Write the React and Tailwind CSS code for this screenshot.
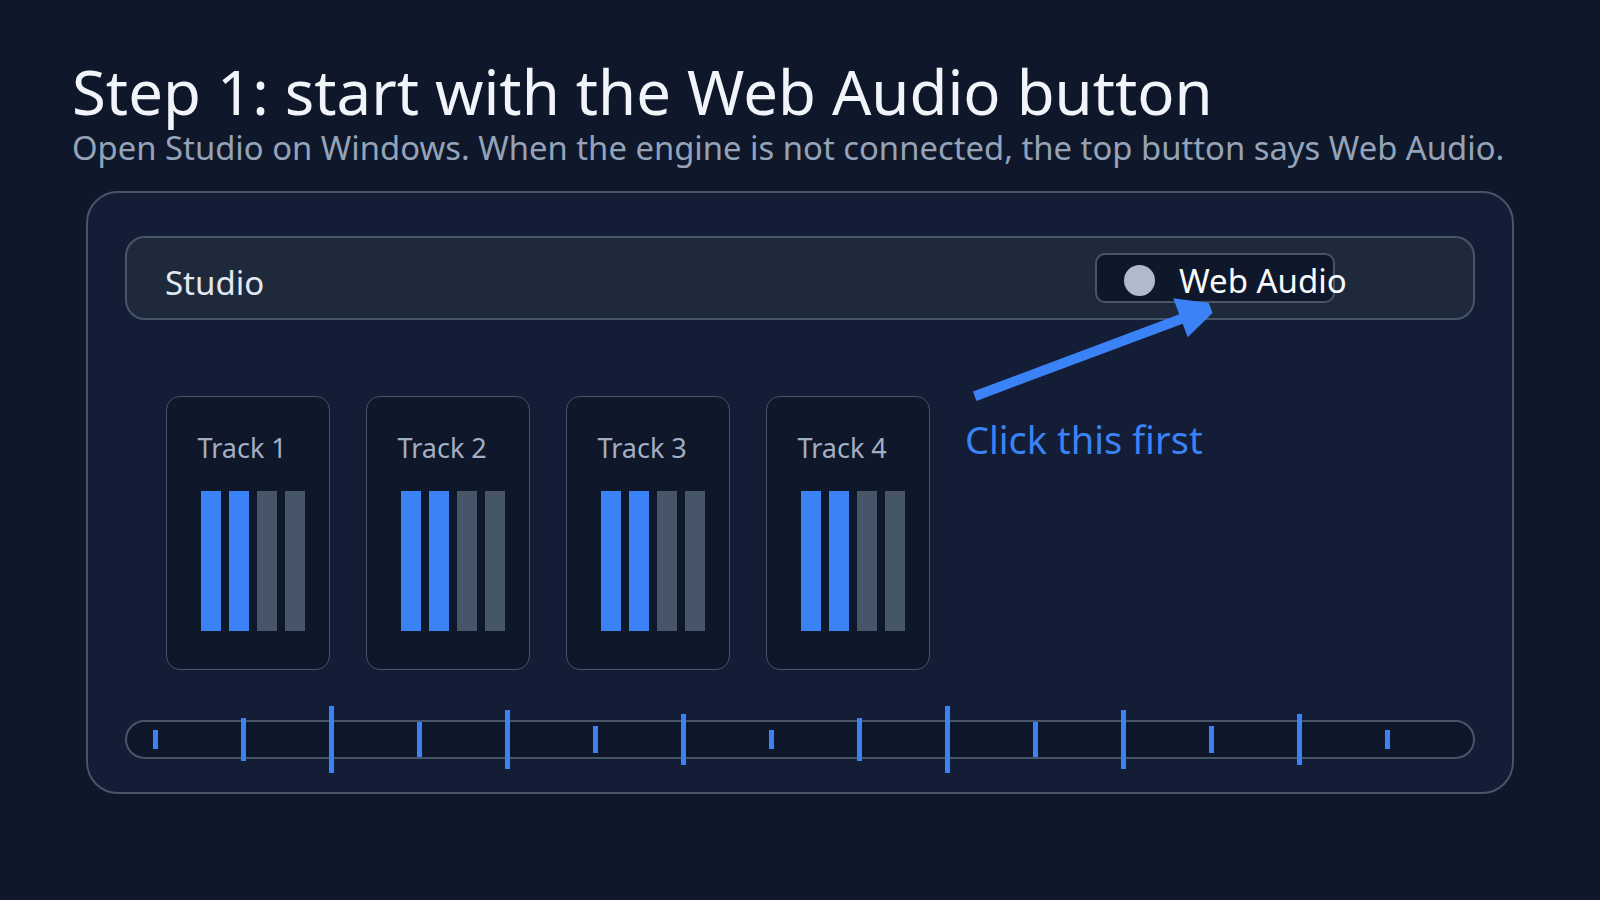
import React from 'react';

const tracks = ['Track 1', 'Track 2', 'Track 3', 'Track 4'];

// timeline tick heights, repeating every 7 ticks
const tickHeights = ['h-[19px]', 'h-[43px]', 'h-[67px]', 'h-[35px]', 'h-[59px]', 'h-[27px]', 'h-[51px]'];
const ticks = Array.from({ length: 15 }, (_, i) => tickHeights[i % 7]);

const TrackCard = ({ name }) => (
  <div className="w-[164px] h-[274px] shrink-0 rounded-[14px] border-[1.5px] border-[#475569] bg-[#0f172a] pl-[30.5px] pt-[37px]">
    <div className="text-[27px] leading-[27px] text-[#a3afc2]">{name}</div>
    <div className="mt-[30px] ml-[3px] flex gap-[8px]">
      <div className="w-[20px] h-[140px] bg-[#3b82f6]" />
      <div className="w-[20px] h-[140px] bg-[#3b82f6]" />
      <div className="w-[20px] h-[140px] bg-[#475569]" />
      <div className="w-[20px] h-[140px] bg-[#475569]" />
    </div>
  </div>
);

export default function App() {
  return (
    <div className="relative min-h-screen w-full overflow-hidden bg-[#0f172a] font-['Noto_Sans',sans-serif]">
      <div className="pl-[72px] pt-[60px]">
        <h1 className="text-[61.7px] leading-[62px] font-normal text-[#f1f5f9]">
          Step 1: start with the Web Audio button
        </h1>
        <p className="mt-[9px] text-[32.8px] leading-[33px] text-[#94a3b8]">
          Open Studio on Windows. When the engine is not connected, the top button says Web Audio.
        </p>
      </div>

      <div className="mx-auto mt-[27px] w-[1428px] rounded-[32px] border-2 border-[#475569] bg-[#131d35] px-[37px] pt-[43px] pb-[33px]">
        {/* app header */}
        <div className="flex h-[84px] items-center rounded-[20px] border-2 border-[#475569] bg-[#1e293b] pl-[38px]">
          <span className="mt-[8px] text-[33px] leading-[33px] text-[#e2e8f0]">Studio</span>
          <div className="ml-auto mr-[138px] -mt-[1px] flex h-[50px] w-[240px] items-center gap-[24px] whitespace-nowrap rounded-[10px] border-2 border-[#475569] bg-[#0f172a] pl-[27px] pt-[6px]">
            <span className="h-[31px] w-[31px] shrink-0 rounded-full bg-[#b0bacb]" />
            <span className="text-[33px] leading-[33px] text-[#f8fafc]">Web Audio</span>
          </div>
        </div>

        <div className="mt-[76px] flex items-start pl-[41px]">
          <div className="flex gap-[36px]">
            {tracks.map(t => (
              <TrackCard key={t} name={t} />
            ))}
          </div>
          <div className="ml-[35px] mt-[24px] text-[38px] leading-[38px] text-[#3b82f6]">Click this first</div>
        </div>

        {/* timeline */}
        <div className="mt-[50px] flex h-[39px] items-center gap-[83px] rounded-full border-2 border-[#475569] bg-[#0f172a] pl-[26px]">
          {ticks.map((h, i) => (
            <div key={i} className={`w-[5px] shrink-0 bg-[#3b82f6] ${h}`} />
          ))}
        </div>
      </div>

      {/* pointer arrow */}
      <svg className="pointer-events-none absolute left-0 top-0" width="1600" height="900" viewBox="0 0 1600 900">
        <line x1="974.7" y1="396.2" x2="1210.5" y2="308" stroke="#3b82f6" strokeWidth="10" />
        <polygon points="1173.3,298.3 1208.5,303 1212.5,313 1187.7,337.3" fill="#3b82f6" />
      </svg>
    </div>
  );
}
